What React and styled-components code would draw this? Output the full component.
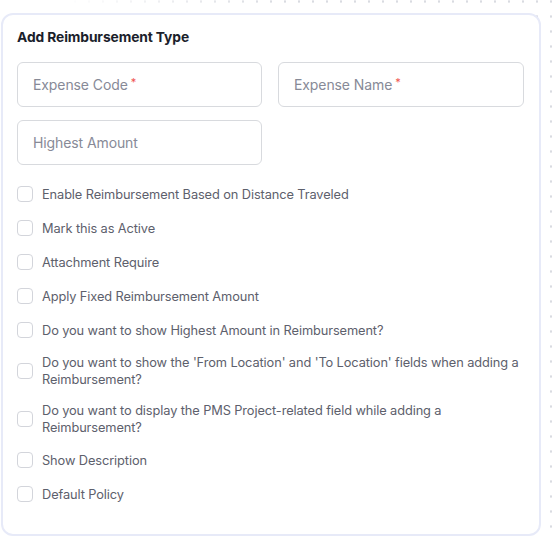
import React from 'react';
import styled, { createGlobalStyle } from 'styled-components';

const GlobalStyle = createGlobalStyle`
  html, body {
    margin: 0;
    padding: 0;
    background: #ffffff;
  }
  body {
    font-family: 'Inter', 'Noto Sans', sans-serif;
    -webkit-font-smoothing: antialiased;
  }
`

const options = [
  'Enable Reimbursement Based on Distance Traveled',
  'Mark this as Active',
  'Attachment Require',
  'Apply Fixed Reimbursement Amount',
  'Do you want to show Highest Amount in Reimbursement?',
  "Do you want to show the 'From Location' and 'To Location' fields when adding a Reimbursement?",
  'Do you want to display the PMS Project-related field while adding a Reimbursement?',
  'Show Description',
  'Default Policy',
]

export default () => (
  <Page>
    <GlobalStyle />
    <Dots />
    <Card>
      <Title>Add Reimbursement Type</Title>
      <Fields>
        <Field>
          <Placeholder>Expense Code<Star>*</Star></Placeholder>
        </Field>
        <Field>
          <Placeholder>Expense Name<Star>*</Star></Placeholder>
        </Field>
        <Field>
          <Placeholder>Highest Amount</Placeholder>
        </Field>
      </Fields>
      <Options>
        {options.map((text) => (
          <Option key={text}>
            <Box />
            <Label>{text}</Label>
          </Option>
        ))}
      </Options>
    </Card>
  </Page>
);

const Page = styled.div`
  position: relative;
  width: 553px;
  height: 538px;
  padding: 13px 0 0 1px;
  box-sizing: border-box;
  overflow: hidden;
`

const Dots = styled.div`
  position: absolute;
  inset: 0;
  background-image: radial-gradient(circle, #d9dbe1 1px, transparent 1.3px);
  background-size: 14px 15px;
  background-position: -2px -6px;
  -webkit-mask-image: linear-gradient(to right, transparent 60px, #000 280px);
  mask-image: linear-gradient(to right, transparent 60px, #000 280px);
`

const Card = styled.section`
  position: relative;
  width: 540px;
  height: 523px;
  box-sizing: border-box;
  background: #ffffff;
  border: 2px solid #e7eaf8;
  border-radius: 12px;
  padding: 12px 15px 0 14px;
`

const Title = styled.h2`
  margin: 0;
  font-size: 13.8px;
  line-height: 20px;
  font-weight: 700;
  color: #1b1e2b;
  letter-spacing: -0.1px;
`

const Fields = styled.div`
  display: grid;
  grid-template-columns: 245px 246px;
  column-gap: 16px;
  row-gap: 13px;
  margin-top: 15px;
`

const Field = styled.div`
  height: 45px;
  box-sizing: border-box;
  border: 1px solid #d8dade;
  border-radius: 6px;
  display: flex;
  align-items: center;
  padding-left: 15px;
`

const Placeholder = styled.span`
  font-size: 14px;
  color: #878a97;
  letter-spacing: -0.1px;
`

const Star = styled.sup`
  color: #ef5350;
  font-size: 11px;
  margin-left: 3px;
  vertical-align: 4px;
  line-height: 0;
`

const Options = styled.div`
  display: flex;
  flex-direction: column;
  gap: 14px;
  margin-top: 19px;
`

const Option = styled.label`
  display: flex;
  align-items: center;
  gap: 9px;
  min-height: 20px;
`

const Box = styled.span`
  flex: 0 0 16px;
  width: 16px;
  height: 16px;
  box-sizing: border-box;
  border: 1px solid #d3d5db;
  border-radius: 4px;
  background: #fff;
`

const Label = styled.span`
  font-size: 12.8px;
  line-height: 17px;
  color: #5d606c;
  letter-spacing: -0.1px;
  max-width: 482px;
`
